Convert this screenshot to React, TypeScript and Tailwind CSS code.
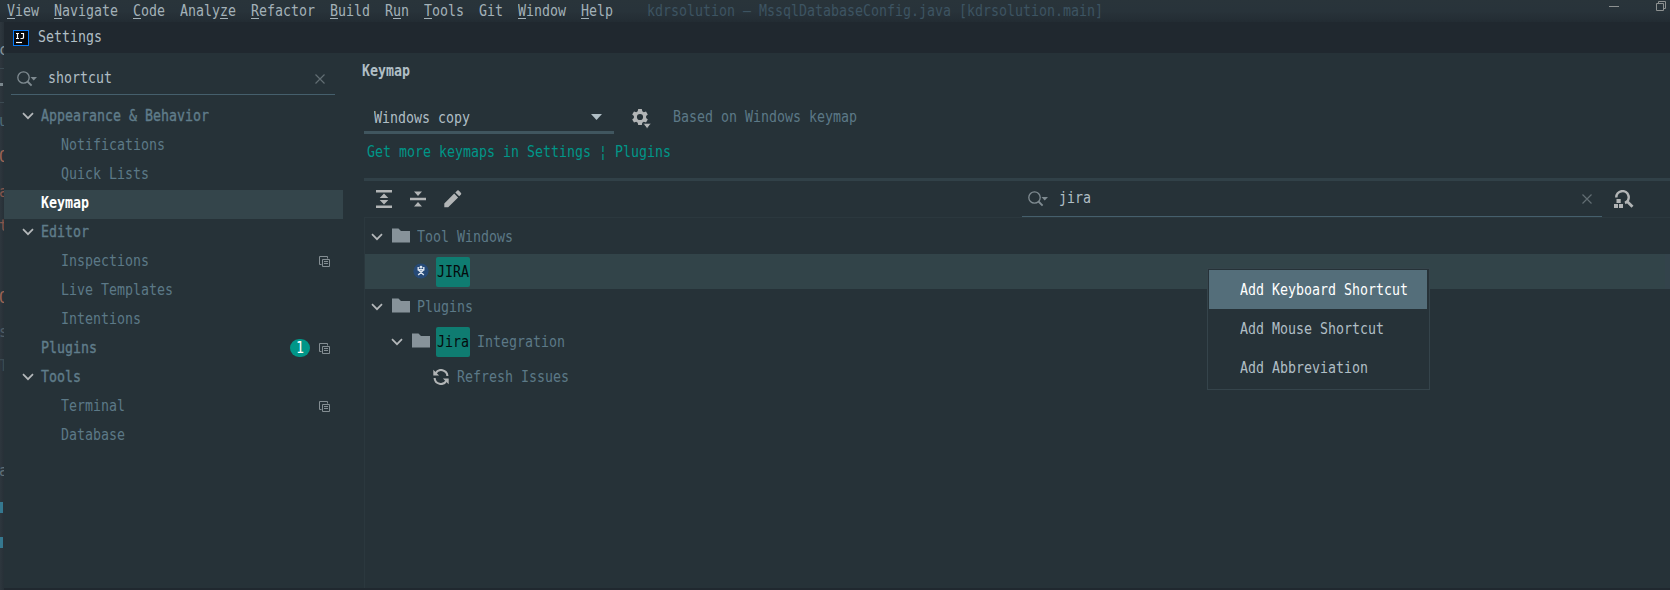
import React from "react";

const ADVANCE = 8;

/* Condensed monospace run: every character occupies an 8px cell. */
function T({ children, className = "" }: { children: string; className?: string }) {
  return (
    <span className={"block h-5 shrink-0 whitespace-pre " + className} style={{ width: children.length * ADVANCE }}>
      <span className="block w-max origin-left scale-x-[0.8859] leading-5">{children}</span>
    </span>
  );
}

function MenuEntry({ label, hot }: { label: string; hot: number }) {
  return (
    <span className="block h-5 shrink-0 whitespace-pre" style={{ width: label.length * ADVANCE }}>
      <span className="block w-max origin-left scale-x-[0.8859] leading-5">
        {hot < 0 ? (
          label
        ) : (
          <>
            {label.slice(0, hot)}
            <span className="underline decoration-1 underline-offset-[2px]">{label[hot]}</span>
            {label.slice(hot + 1)}
          </>
        )}
      </span>
    </span>
  );
}

function Chevron() {
  return (
    <svg className="block h-[8px] w-[12px] shrink-0" viewBox="0 0 12 8" fill="none" stroke="#b4b8ba" strokeWidth="1.7">
      <path d="M1 1.2 L6 6.2 L11 1.2" />
    </svg>
  );
}

function Folder() {
  return (
    <svg className="block h-[15px] w-[18px] shrink-0" viewBox="0 0 18 15" fill="#87939a">
      <path d="M0 0.5 H6.5 L9 3 H18 V14.5 H0 Z" />
    </svg>
  );
}

function SearchIcon() {
  return (
    <svg className="block h-[16px] w-[21px] shrink-0" viewBox="0 0 21 16" fill="none">
      <circle cx="6.5" cy="6.5" r="5.7" stroke="#7f8b91" strokeWidth="1.3" />
      <path d="M10.5 10.5 L14.6 14.6" stroke="#7f8b91" strokeWidth="1.9" />
      <path d="M13.5 6 H20 L16.7 9.6 Z" fill="#7f8b91" />
    </svg>
  );
}

function CloseIcon() {
  return (
    <svg className="block h-[10px] w-[10px] shrink-0" viewBox="0 0 10 10" stroke="#616d73" strokeWidth="1.2">
      <path d="M0.5 0.5 L9.5 9.5 M9.5 0.5 L0.5 9.5" />
    </svg>
  );
}

function CopyIcon() {
  return (
    <svg className="-mt-[2px] block h-[11px] w-[11px] shrink-0" viewBox="0 0 11 11" fill="none" stroke="#848e93">
      <path d="M2.5 8.5 H0.5 V0.5 H8.5 V2.5" />
      <path d="M3.5 3.5 H10.5 V10.5 H3.5 Z M5 5.5 H9 M5 7.5 H9" />
    </svg>
  );
}

type Row = { label: string; level: number; open?: boolean; selected?: boolean; copy?: boolean; badge?: string };

const rows: Row[] = [
  { label: "Appearance & Behavior", level: 0, open: true },
  { label: "Notifications", level: 1 },
  { label: "Quick Lists", level: 1 },
  { label: "Keymap", level: 0, selected: true },
  { label: "Editor", level: 0, open: true },
  { label: "Inspections", level: 1, copy: true },
  { label: "Live Templates", level: 1 },
  { label: "Intentions", level: 1 },
  { label: "Plugins", level: 0, copy: true, badge: "1" },
  { label: "Tools", level: 0, open: true },
  { label: "Terminal", level: 1, copy: true },
  { label: "Database", level: 1 },
];

function SideRow({ row }: { row: Row }) {
  const tone = row.selected ? "font-bold text-white" : row.level === 0 ? "text-[#607d8b] [-webkit-text-stroke:0.35px_#607d8b]" : "text-[#5c7987]";
  return (
    <div className={"flex h-[29px] w-[339px] items-center pr-[13px] " + (row.selected ? "bg-[#34454b]" : "")}>
      <div className="-mt-[4px] flex w-[37px] shrink-0 pl-[18px]">{row.open && <Chevron />}</div>
      {row.level === 1 && <div className="w-5 shrink-0" />}
      <T className={"-mt-[3px] " + tone}>{row.label}</T>
      <div className="ml-auto flex items-center gap-[9px]">
        {row.badge && (
          <div className="-mt-[3px] flex h-[18px] w-5 items-center justify-center rounded-full bg-[#009688] text-white">
            <T>{row.badge}</T>
          </div>
        )}
        {row.copy && <CopyIcon />}
      </div>
    </div>
  );
}

function EdgeGlyph({ gap, tone, children }: { gap: string; tone: string; children: string }) {
  return (
    <div className={"flex h-5 w-1 justify-end overflow-hidden " + gap}>
      <span className={"-mr-[4px] leading-5 " + tone}>{children}</span>
    </div>
  );
}

function EditorEdge() {
  return (
    <div className="flex h-[568px] w-1 shrink-0 flex-col overflow-hidden bg-linear-to-r from-[#2e373e] to-[#273037]">
      <EdgeGlyph gap="mt-[18px]" tone="text-[#86949b]">c</EdgeGlyph>
      <div className="mt-[8px] h-px bg-[#3b4a52]" />
      <div className="mt-[14px] h-[3px] w-[3px] bg-[#7b878d]" />
      <div className="mt-[16px] h-px bg-[#3b4a52]" />
      <EdgeGlyph gap="mt-[8px]" tone="text-[#4c6b78]">u</EdgeGlyph>
      <EdgeGlyph gap="mt-[16px]" tone="text-[#9c6453]">O</EdgeGlyph>
      <EdgeGlyph gap="mt-[15px]" tone="text-[#84564c]">a</EdgeGlyph>
      <EdgeGlyph gap="mt-[14px]" tone="text-[#84564c]">t</EdgeGlyph>
      <EdgeGlyph gap="mt-[52px]" tone="text-[#9c6453]">O</EdgeGlyph>
      <EdgeGlyph gap="mt-[14px]" tone="text-[#4e5c65]">s</EdgeGlyph>
      <EdgeGlyph gap="mt-[14px]" tone="text-[#3b4a52]">T</EdgeGlyph>
      <EdgeGlyph gap="mt-[85px]" tone="text-[#5f6f77]">a</EdgeGlyph>
      <div className="mt-[21px] h-[11px] w-[3px] shrink-0 bg-[#35788f]" />
      <div className="mt-[24px] h-[11px] w-[3px] shrink-0 bg-[#35788f]" />
    </div>
  );
}

const menus: [string, number][] = [
  ["View", 0], ["Navigate", 0], ["Code", 0], ["Analyze", 5], ["Refactor", 0], ["Build", 0],
  ["Run", 1], ["Tools", 0], ["Git", -1], ["Window", 0], ["Help", 0],
];

function Match({ children }: { children: string }) {
  return (
    <div className="flex h-[30px] w-[34px] shrink-0 items-center rounded-[2px] bg-[#0f7c71] pl-px text-[#050b0d]">
      <T>{children}</T>
    </div>
  );
}

export default function App() {
  return (
    <div className="flex h-[590px] w-[1670px] flex-col overflow-hidden bg-[#263238] font-['DejaVu_Sans_Mono',monospace] text-[15px] text-[#b0bec5]">
      <header className="flex h-[22px] shrink-0 bg-linear-to-b from-[#29343a] via-[#28333a] to-[#232c33] pl-[7px] text-[#a3b1b8]">
        <nav className="mt-px flex gap-[15px]">
          {menus.map(([label, hot]) => <MenuEntry key={label} label={label} hot={hot} />)}
        </nav>
        <T className="ml-[34px] mt-px text-[#3d5462]">kdrsolution – MssqlDatabaseConfig.java [kdrsolution.main]</T>
        <svg className="ml-auto mr-[4px] mt-px block h-[10px] w-[57px]" viewBox="0 0 57 10" fill="none" stroke="#8d9191">
          <path d="M0 5.5 H10 M47.5 2.5 H54.5 V9.5 H47.5 Z M49.5 2 V0.5 H56.5 V7.5 H55" />
        </svg>
      </header>

      <div className="flex min-h-0 grow">
        <EditorEdge />
        <div className="flex min-w-0 grow flex-col">
          <div className="flex h-[31px] shrink-0 items-center bg-[#20282f] pl-[9px]">
            <svg className="block h-4 w-4" viewBox="0 0 16 16">
              <rect x="0.5" y="0.5" width="15" height="15" fill="#05070a" stroke="#087cfa" />
              <path d="M3 3.5 H6 M4.5 3.5 V8.5 M3 8.5 H6 M8 3.5 H10.5 V7.5 Q10.5 8.5 9.2 8.5 H7.5" fill="none" stroke="#fff" strokeWidth="1.2" />
              <path d="M3 12.5 H9" stroke="#fff" strokeWidth="1.2" />
            </svg>
            <T className="-mt-px ml-[9px]">Settings</T>
          </div>

          <div className="flex min-h-0 grow">
            <aside className="flex w-[358px] shrink-0 flex-col">
              <div className="ml-[7px] mt-[11px] flex h-[31px] w-[324px] shrink-0 items-center border-b border-[#455f6c] pl-[6px] pr-[10px]">
                <SearchIcon />
                <T className="-mt-[3px] ml-[10px]">shortcut</T>
                <div className="ml-auto"><CloseIcon /></div>
              </div>
              <div className="mt-[8px] flex flex-col">
                {rows.map((row) => <SideRow key={row.label} row={row} />)}
              </div>
            </aside>

            <main className="flex min-w-0 grow flex-col">
              <T className="mt-[8px] font-bold">Keymap</T>
              <div className="ml-[2px] mt-[18px] flex h-[35px] shrink-0">
                <div className="flex w-[250px] items-center border-b-[3px] border-[#40565f] pl-[10px] pr-[12px]">
                  <T className="mt-[5px]">Windows copy</T>
                  <svg className="ml-auto mt-[4px] block h-[6px] w-[11px]" viewBox="0 0 11 6" fill="#b0bec5"><path d="M0 0 H11 L5.5 6 Z" /></svg>
                </div>
                <svg className="ml-[18px] mt-[10px] block h-[20px] w-[19px] shrink-0" viewBox="0 0 19 20" fill="#b2b5b6">
                  <path fillRule="evenodd" d="M6.2 0 H9.8 L10.3 2.3 L11.8 3.2 L14 2.4 L15.8 5.5 L14.1 7.1 V8.9 L15.8 10.5 L14 13.6 L11.8 12.8 L10.3 13.7 L9.8 16 H6.2 L5.7 13.7 L4.2 12.8 L2 13.6 L0.2 10.5 L1.9 8.9 V7.1 L0.2 5.5 L2 2.4 L4.2 3.2 L5.7 2.3 Z M8 4.9 A3.1 3.1 0 1 0 8 11.1 A3.1 3.1 0 1 0 8 4.9 Z" />
                  <path d="M11 14.3 H19.2 L15.1 19.8 Z" stroke="#263238" strokeWidth="0.8" />
                </svg>
                <T className="ml-[22px] mt-[8px] text-[#5c7987]">Based on Windows keymap</T>
              </div>
              <T className="ml-[5px] mt-[8px] text-[#009688]">Get more keymaps in Settings ¦ Plugins</T>
              <div className="ml-[2px] mt-[16px] h-[3px] shrink-0 bg-[#314148]" />

              <div className="ml-[2px] flex h-[37px] shrink-0 border-b border-[#2b383e] pl-[12px]">
                <svg className="mt-[9px] block h-[18px] w-4 shrink-0" viewBox="0 0 16 18" fill="#b2b5b6">
                  <path d="M0 0 H16 V2.6 H0 Z M0 15.4 H16 V18 H0 Z M8 3.6 L12.3 8 H3.7 Z M8 14.4 L12.3 10 H3.7 Z" />
                </svg>
                <svg className="ml-[18px] mt-[9px] block h-[18px] w-4 shrink-0" viewBox="0 0 16 18" fill="#b2b5b6">
                  <path d="M0 7.7 H16 V10.3 H0 Z M8 6 L12 1.5 H4 Z M8 12 L12 16.5 H4 Z" />
                </svg>
                <svg className="ml-[18px] mt-[9px] block h-[18px] w-[18px] shrink-0" viewBox="0 0 18 18" fill="#b2b5b6">
                  <path d="M0.3 17.3 V13.4 L10.2 3.5 L14.1 7.4 L4.2 17.3 Z M11.3 2.4 L13.3 0.5 Q14 0 14.7 0.5 L17 2.9 Q17.6 3.6 17 4.4 L15.2 6.3 Z" />
                </svg>
                <div className="ml-[560px] flex h-[36px] w-[580px] shrink-0 items-center border-b border-[#455f6c] pl-[6px] pr-[10px]">
                  <SearchIcon />
                  <T className="-mt-[2px] ml-[10px]">jira</T>
                  <div className="ml-auto"><CloseIcon /></div>
                </div>
                <svg className="ml-[12px] mt-[9px] block h-[18px] w-[20px] shrink-0" viewBox="0 0 20 18" fill="none">
                  <path d="M2.3 7.5 A6.2 6.2 0 1 1 11 13" stroke="#b2b5b6" strokeWidth="2.5" />
                  <path d="M12.7 11 L18.5 16.8" stroke="#b2b5b6" strokeWidth="2.8" />
                  <path d="M2.5 9 H6.7 V13 H2.5 Z M0 14 H4 V18 H0 Z M5 14 H9 V18 H5 Z" fill="#b2b5b6" />
                </svg>
              </div>

              <div className="relative ml-[2px] flex grow flex-col border-l border-[#2b383e]">
                <div className="mt-px flex h-[35px] items-center pl-[6px]">
                  <Chevron />
                  <div className="-mt-[2px] ml-[9px]"><Folder /></div>
                  <T className="ml-[7px] text-[#5c7987]">Tool Windows</T>
                </div>
                <div className="flex h-[35px] items-center border-r-[5px] border-[#33434b] bg-[#324449] pl-[48px]">
                  <svg className="-mt-px block h-4 w-4 shrink-0" viewBox="0 0 16 16">
                    <circle cx="8" cy="8" r="7.6" fill="#264a77" />
                    <path d="M5.2 4 V6.8 H10.8 V4 M5.2 12 L10.5 7 M10.8 12 L5.5 7" fill="none" stroke="#d8e2ee" strokeWidth="1.4" />
                    <circle cx="8" cy="4.2" r="1.4" fill="#d8e2ee" />
                  </svg>
                  <div className="ml-[7px] mt-[1px]"><Match>JIRA</Match></div>
                </div>
                <div className="flex h-[35px] items-center pl-[6px]">
                  <Chevron />
                  <div className="-mt-[2px] ml-[9px]"><Folder /></div>
                  <T className="ml-[7px] text-[#5c7987]">Plugins</T>
                </div>
                <div className="flex h-[35px] items-center pl-[26px]">
                  <Chevron />
                  <div className="-mt-[2px] ml-[9px]"><Folder /></div>
                  <div className="ml-[6px] mt-px"><Match>Jira</Match></div>
                  <T className="ml-[7px] text-[#5c7987]">Integration</T>
                </div>
                <div className="flex h-[35px] items-center pl-[68px]">
                  <svg className="block h-4 w-4 shrink-0" viewBox="0 0 16 16" fill="none" stroke="#b2b5b6" strokeWidth="2.1">
                    <path d="M2.6 4.3 A6.3 6.3 0 0 1 14.4 7 M13.4 11.7 A6.3 6.3 0 0 1 1.6 9" />
                    <path d="M0.3 0.8 V6.6 H6.1 Z M15.7 15.2 V9.4 H9.9 Z" fill="#b2b5b6" stroke="none" />
                  </svg>
                  <T className="ml-[8px] text-[#5c7987]">Refresh Issues</T>
                </div>

                <div className="absolute left-[842px] top-[50px] h-[122px] w-[223px] border border-[#35444b] bg-[#263238] pl-px pr-[2px] pt-px">
                  <div className="flex h-[39px] items-center bg-[#546e7a] pl-[31px] text-white"><T>Add Keyboard Shortcut</T></div>
                  <div className="flex h-[39px] items-center pl-[31px]"><T>Add Mouse Shortcut</T></div>
                  <div className="flex h-[39px] items-center pl-[31px]"><T>Add Abbreviation</T></div>
                </div>
              </div>
            </main>
          </div>
          <div className="h-[2px] shrink-0 bg-[#20282f]" />
        </div>
      </div>
    </div>
  );
}
